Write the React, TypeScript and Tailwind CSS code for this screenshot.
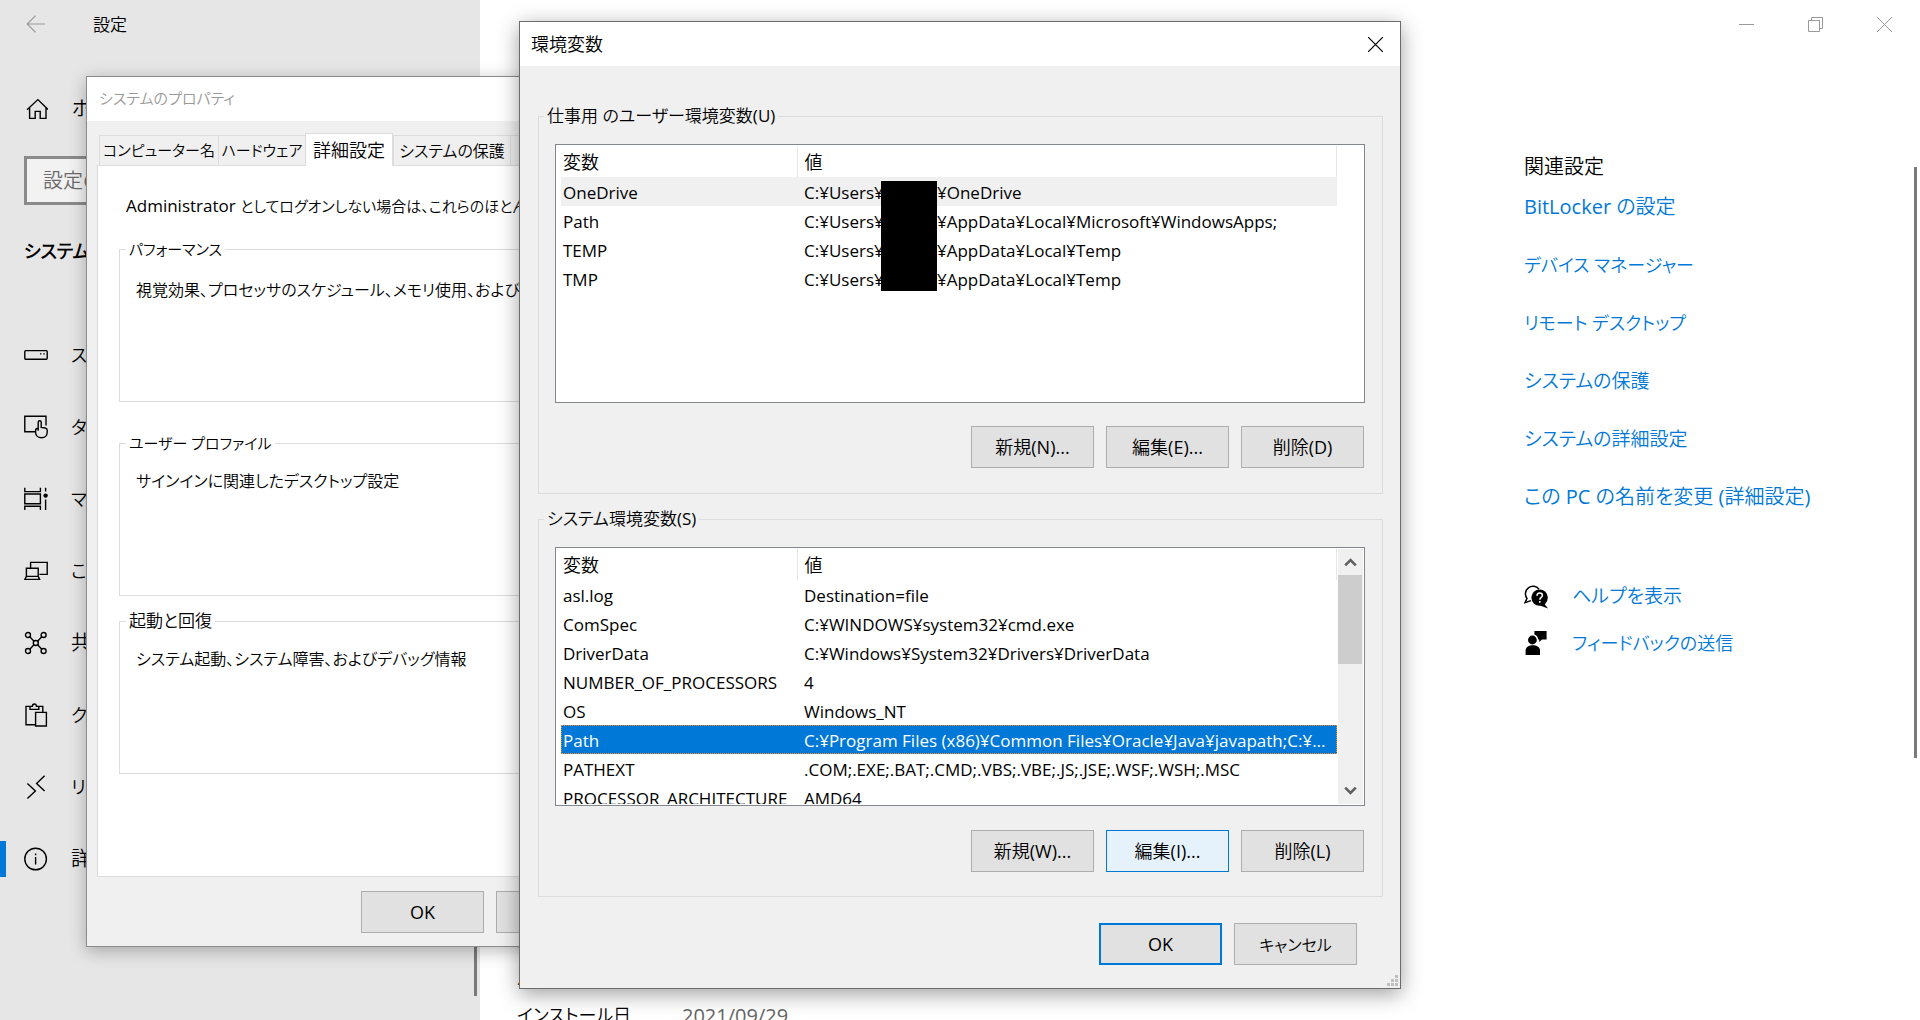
import React from 'react';

type Variable = { name: string; value?: string; masked?: string };

const userVariables: Variable[] = [
  { name: 'OneDrive', masked: '¥OneDrive' },
  { name: 'Path', masked: '¥AppData¥Local¥Microsoft¥WindowsApps;' },
  { name: 'TEMP', masked: '¥AppData¥Local¥Temp' },
  { name: 'TMP', masked: '¥AppData¥Local¥Temp' },
];

const systemVariables: Variable[] = [
  { name: 'asl.log', value: 'Destination=file' },
  { name: 'ComSpec', value: 'C:¥WINDOWS¥system32¥cmd.exe' },
  { name: 'DriverData', value: 'C:¥Windows¥System32¥Drivers¥DriverData' },
  { name: 'NUMBER_OF_PROCESSORS', value: '4' },
  { name: 'OS', value: 'Windows_NT' },
  { name: 'Path', value: 'C:¥Program Files (x86)¥Common Files¥Oracle¥Java¥javapath;C:¥...' },
  { name: 'PATHEXT', value: '.COM;.EXE;.BAT;.CMD;.VBS;.VBE;.JS;.JSE;.WSF;.WSH;.MSC' },
  { name: 'PROCESSOR_ARCHITECTURE', value: 'AMD64' },
];

function Icon({ children, size = 24 }: { children: React.ReactNode; size?: number }) {
  return (
    <svg
      width={size}
      height={size}
      viewBox={`0 0 ${size} ${size}`}
      fill="none"
      stroke="currentColor"
      strokeWidth="1.4"
      className="shrink-0"
      aria-hidden="true"
    >
      {children}
    </svg>
  );
}

const HomeIcon = () => (
  <Icon>
    <path d="M3 12.8 13.9 2.6 24 12.4M5.6 10.8V21.4H11.2V14.4H16.2V21.4H22V10.8" />
  </Icon>
);
const StorageIcon = () => (
  <Icon>
    <rect x="0.8" y="7.6" width="22.4" height="8.6" rx="1" />
    <path d="M16 10.9h1.4M19.3 10.9h1.4" />
  </Icon>
);
const TabletIcon = () => (
  <Icon>
    <path d="M11 16.8H.8V1.2H22V10.6" />
    <path d="M14.2 15.8V7.3a1.5 1.5 0 0 1 3 0v5.1l4 .6c1.2.2 2 .8 2 2v2.2c0 3.4-2.4 5.6-5.6 5.6-3.4 0-6-2.2-6-5.6v-1.6c0-1.7 1-2.4 2.6-2.4" />
  </Icon>
);
const MultitaskIcon = () => (
  <Icon>
    <path d="M.8.8v3.8h15.6V.8M.8 23v-3.8h15.6V23M.8 7h15.6v9.8H.8zM21.6.8v3.8M21.6 12.6V23" />
    <circle cx="21.6" cy="8.6" r="2.2" fill="currentColor" stroke="none" />
  </Icon>
);
const ProjectIcon = () => (
  <Icon>
    <path d="M6.6 9V3.4H23.2V15.4H15.4M2.4 9.2H14.2V17.4H2.4zM2.4 17.4.8 20.4H15.6L14.2 17.4" />
  </Icon>
);
const SharedIcon = () => (
  <Icon>
    <circle cx="4" cy="4" r="2.5" />
    <circle cx="19.6" cy="4" r="2.5" />
    <circle cx="4" cy="20" r="2.5" />
    <circle cx="19.6" cy="20" r="2.5" />
    <circle cx="11.8" cy="12" r="2.5" />
    <path d="m5.8 5.8 4.2 4.4M17.8 5.8l-4.2 4.4M5.8 18.2l4.2-4.4M17.8 18.2l-4.2-4.4" />
  </Icon>
);
const ClipboardIcon = () => (
  <Icon>
    <path d="M11 21.8H2V3.4H6M14.6 3.4H18.8V9M6 3.4V6.4H14.8V3.4H12.4C12.4.2 8.4.2 8.4 3.4zM11.6 9.4H22.4V23H11.6z" />
  </Icon>
);
const RemoteIcon = () => (
  <Icon>
    <path d="m3.4 8.4 8 7.6-8 7.4M20.6.8l-8 7.8 8 7.4" />
  </Icon>
);
const InfoIcon = () => (
  <Icon>
    <circle cx="11.6" cy="12" r="10.8" />
    <path d="M11.6 10v7.4M11.6 6.4v1.8" />
  </Icon>
);

const navItems = [
  { label: 'ストレージ', icon: <StorageIcon />, size: 'text-lg' },
  { label: 'タブレット', icon: <TabletIcon />, size: 'text-lg' },
  { label: 'マルチタスク', icon: <MultitaskIcon />, size: 'text-lg' },
  { label: 'この PC へのプロジェクション', icon: <ProjectIcon />, size: 'text-lg' },
  { label: '共有エクスペリエンス', icon: <SharedIcon />, size: 'text-xl' },
  { label: 'クリップボード', icon: <ClipboardIcon />, size: 'text-lg' },
  { label: 'リモート デスクトップ', icon: <RemoteIcon />, size: 'text-lg' },
  { label: '詳細情報', icon: <InfoIcon />, size: 'text-xl', active: true },
];

const relatedLinks = [
  { label: 'BitLocker の設定', size: 'text-xl' },
  { label: 'デバイス マネージャー', size: 'text-lg' },
  { label: 'リモート デスクトップ', size: 'text-lg' },
  { label: 'システムの保護', size: 'text-[19px]' },
  { label: 'システムの詳細設定', size: 'text-[19px]' },
  { label: 'この PC の名前を変更 (詳細設定)', size: 'text-xl' },
];

function Sidebar() {
  return (
    <aside className="relative w-[480px] shrink-0 bg-[#e6e6e6] text-xl">
      <div className="flex h-12 items-center gap-12 pl-[26px]">
        <button aria-label="戻る" className="text-[#999]">
          <svg width="19" height="18" viewBox="0 0 19 18" fill="none" stroke="currentColor" strokeWidth="1.2">
            <path d="M9.6.6 1.2 9l8.4 8.4M1.2 9H19" />
          </svg>
        </button>
        <h1 className="pt-px text-[17px]">設定</h1>
      </div>
      <a href="#home" className="mt-[37px] flex h-12 items-center gap-6 pl-6">
        <HomeIcon />
        ホーム
      </a>
      <div className="mt-[23px] px-6">
        <input
          aria-label="設定の検索"
          placeholder="設定の検索"
          className="h-[49px] w-full border-[3px] border-[#8a8a8a] bg-[#f2f2f2] px-4 placeholder:text-[#6b6b6b]"
        />
      </div>
      <h2 className="mt-8 pl-6 text-lg font-bold leading-7">システム</h2>
      <nav className="mt-[54px]">
        {navItems.map((item) => (
          <a key={item.label} href="#nav" className={`flex h-[72px] items-center ${item.size}`}>
            <span className={item.active ? 'h-9 w-1.5 bg-[#0078d7]' : 'h-9 w-1.5'} />
            <span className="flex items-center gap-[23px] pl-[18px]">
              {item.icon}
              {item.label}
            </span>
          </a>
        ))}
      </nav>
      <div className="absolute right-[3px] top-[170px] h-[826px] w-[3px] bg-[#7a7a7a]" />
    </aside>
  );
}

function HelpIcon() {
  return (
    <svg width="24" height="24" viewBox="0 0 24 24" className="shrink-0" aria-hidden="true">
      <path
        d="M7 15.6 1 17.6l2-4.2A7.4 7.4 0 1 1 15 4.2"
        fill="none"
        stroke="currentColor"
        strokeWidth="1.5"
      />
      <circle cx="15.6" cy="12.6" r="8.2" fill="currentColor" />
      <path d="m19 17 5 6.6-8-3z" fill="currentColor" />
      <path
        d="M13 10.8c0-3.8 5.4-3.4 5.4-.4 0 2-2.6 2-2.6 4.4M15.8 16v1.8"
        fill="none"
        stroke="white"
        strokeWidth="1.5"
      />
    </svg>
  );
}

function FeedbackIcon() {
  return (
    <svg width="24" height="24" viewBox="0 0 24 24" fill="currentColor" className="shrink-0" aria-hidden="true">
      <path d="M10.4 0H22.6V8.4H18L15.2 11V8.4H14.2C14 5.8 12.6 4 10.4 3.4z" />
      <circle cx="8.4" cy="9" r="4.4" />
      <path d="M1.6 24v-4.6c0-7 14.4-7 14.4 0V24z" />
    </svg>
  );
}

function SettingsPage() {
  return (
    <main className="relative flex min-w-0 flex-1">
      <div className="flex min-w-0 flex-1 flex-col pl-[37px]">
        <div className="ml-[262px] flex h-[2px]">
          <span className="w-[72px] bg-[#0078d7]" />
          <span className="w-[290px] bg-[#e5e5e5]" />
        </div>
        <dl className="mt-[923px] grid grid-cols-[165px_1fr] text-lg leading-[37px]">
          <dt>エディション</dt>
          <dd className="text-[#666]">Windows 10 Pro</dd>
          <dt>バージョン</dt>
          <dd className="text-[#666]">21H1</dd>
          <dt>インストール日</dt>
          <dd className="text-xl leading-[37px] text-[#666]">2021/09/29</dd>
        </dl>
      </div>
      <aside className="w-[396px] shrink-0 text-xl">
        <div className="flex h-12 items-center justify-end gap-[54px] pr-7 text-[#999]">
          <button aria-label="最小化">
            <svg width="15" height="15" fill="none" stroke="currentColor">
              <path d="M0 7.5h15" />
            </svg>
          </button>
          <button aria-label="元に戻す">
            <svg width="15" height="15" fill="none" stroke="currentColor">
              <path d="M.5 3.5h11v11H.5zM3.5 3V.5h11v11H12" />
            </svg>
          </button>
          <button aria-label="閉じる">
            <svg width="15" height="15" fill="none" stroke="currentColor">
              <path d="m0 0 15 15M15 0 0 15" />
            </svg>
          </button>
        </div>
        <h2 className="mt-[105px] leading-7">関連設定</h2>
        <ul className="mt-3 flex flex-col gap-[30px] text-[#0078d7]">
          {relatedLinks.map((link) => (
            <li key={link.label} className={`h-7 ${link.size}`}>
              <a href="#related" className="leading-7">
                {link.label}
              </a>
            </li>
          ))}
        </ul>
        <div className="mt-[72px] flex flex-col gap-[18px] text-lg">
          <a href="#help" className="flex h-7 items-center gap-6">
            <HelpIcon />
            <span className="text-[19px] text-[#0078d7]">ヘルプを表示</span>
          </a>
          <a href="#feedback" className="flex h-7 items-center gap-6">
            <FeedbackIcon />
            <span className="text-[#0078d7]">フィードバックの送信</span>
          </a>
        </div>
      </aside>
      <div className="absolute right-[3px] top-[167px] h-[591px] w-[3px] bg-[#7a7a7a]" />
    </main>
  );
}

function Button({ children, tone = 'plain' }: { children: React.ReactNode; tone?: 'plain' | 'hover' | 'default' }) {
  const tones = {
    plain: 'border border-[#adadad] bg-[#e1e1e1]',
    hover: 'border border-[#0078d7] bg-[#e5f1fb]',
    default: 'border-2 border-[#0078d7] bg-[#e1e1e1]',
  };
  return <button className={`h-[42px] w-[123px] shrink-0 whitespace-nowrap ${tones[tone]}`}>{children}</button>;
}

const tabs = [
  { label: 'コンピューター名', cls: 'w-[120px] text-[15px]' },
  { label: 'ハードウェア', cls: 'w-[88px] text-[15px]' },
  { label: '詳細設定', cls: 'w-[88px]', active: true },
  { label: 'システムの保護', cls: 'w-[118px] text-base' },
  { label: 'リモート', cls: 'w-[80px] text-[15px]' },
];

const propertyGroups = [
  {
    title: 'パフォーマンス',
    titleCls: 'text-[15px]',
    text: '視覚効果、プロセッサのスケジュール、メモリ使用、および仮想メモリ',
    gap: 'mt-[19px]',
    textGap: 'mt-[17px]',
  },
  {
    title: 'ユーザー プロファイル',
    titleCls: 'text-[15px]',
    text: 'サインインに関連したデスクトップ設定',
    gap: 'mt-[29px]',
    textGap: 'mt-[14px]',
  },
  {
    title: '起動と回復',
    titleCls: 'text-[17px]',
    text: 'システム起動、システム障害、およびデバッグ情報',
    gap: 'mt-[13px]',
    textGap: 'mt-[14px]',
  },
];

function SystemProperties() {
  return (
    <section
      aria-label="システムのプロパティ"
      className="absolute left-[86px] top-[76px] w-[684px] border border-[#8c8c8c] bg-[#f0f0f0] pb-[13px] shadow-[0_4px_16px_rgba(0,0,0,0.28)]"
    >
      <header className="flex h-[44px] items-center bg-white pl-3 text-[15px] text-[#999]">システムのプロパティ</header>
      <div className="mt-3 flex h-8 items-end pl-3" role="tablist">
        {tabs.map((tab) => (
          <button
            key={tab.label}
            role="tab"
            aria-selected={!!tab.active}
            className={`whitespace-nowrap border border-b-0 border-[#dcdcdc] ${tab.cls} ${
              tab.active ? 'relative -mb-px h-[33px] bg-white' : '-mr-px h-[30px]'
            }`}
          >
            {tab.label}
          </button>
        ))}
      </div>
      <div className="mx-[10px] flex flex-col border border-[#dcdcdc] bg-white px-[21px] pb-[39px] pt-7">
        <p className="h-6 whitespace-nowrap pl-[7px] text-[15px] leading-6">
          <span className="text-[17px]">Administrator </span>
          としてログオンしない場合は、これらのほとんどは変更できません。
        </p>
        {propertyGroups.map((group) => (
          <fieldset key={group.title} className={`h-[165px] border border-[#dcdcdc] pl-4 ${group.gap}`}>
            <legend className={`-ml-[10px] px-[3px] leading-6 ${group.titleCls}`}>{group.title}</legend>
            <p className={`whitespace-nowrap text-base leading-6 ${group.textGap}`}>{group.text}</p>
          </fieldset>
        ))}
        <div className="mt-[21px] flex justify-end">
          <button className="h-[42px] w-[216px] border border-[#adadad] bg-[#e1e1e1]">環境変数(N)...</button>
        </div>
      </div>
      <footer className="mt-[14px] flex justify-end gap-3 pr-[15px]">
        <Button>OK</Button>
        <Button>
          <span className="text-base">キャンセル</span>
        </Button>
        <Button>適用(A)</Button>
      </footer>
    </section>
  );
}

function ScrollArrow({ down = false }: { down?: boolean }) {
  return (
    <button aria-label={down ? '下へスクロール' : '上へスクロール'} className="flex h-[26px] w-full items-center justify-center">
      <svg width="13" height="10" viewBox="0 0 13 10" fill="none" stroke="#606060" strokeWidth="2.6">
        <path d={down ? 'm1.2 1.6 5.3 5.4 5.3-5.4' : 'm1.2 8.4 5.3-5.4 5.3 5.4'} />
      </svg>
    </button>
  );
}

function VariableTable({
  rows,
  label,
  selected,
  muted,
  scroll,
}: {
  rows: Variable[];
  label: string;
  selected?: number;
  muted?: number;
  scroll?: boolean;
}) {
  return (
    <div className="flex h-[259px] border border-[#828790] bg-white p-px pl-[5px]">
      <div className="min-w-0 flex-1 overflow-hidden">
        <table aria-label={label} className="w-full table-fixed text-left">
          <thead>
            <tr className="h-[31px]">
              <th className="w-[236px] border-r border-[#e5e5e5] p-0 pl-[2px] pt-px font-normal leading-[30px]">
                変数
              </th>
              <th className="border-r border-[#e5e5e5] p-0 pl-[7px] pt-px font-normal leading-[30px]">値</th>
            </tr>
          </thead>
          <tbody className="text-[17px]">
            {rows.map((row, i) => (
              <tr
                key={row.name}
                className={
                  i === selected
                    ? 'h-[29px] bg-[#0078d7] text-white outline-1 -outline-offset-1 outline-dotted outline-[#ff8728]'
                    : i === muted
                      ? 'h-[29px] bg-[#f0f0f0]'
                      : 'h-[29px]'
                }
              >
                <td className="whitespace-nowrap p-0 pl-[2px] pt-[2px] leading-[27px]">{row.name}</td>
                {row.masked ? (
                  <td className="whitespace-nowrap p-0 pl-[7px]">
                    <span className="flex h-[29px] leading-[31px]">
                      <span className="w-[77px]">C:¥Users¥</span>
                      <span
                        className={`w-14 bg-black ${i === 0 ? 'mt-1' : ''} ${i === rows.length - 1 ? 'mb-[2px]' : ''}`}
                      />
                      {row.masked}
                    </span>
                  </td>
                ) : (
                  <td className="whitespace-nowrap p-0 pl-[7px] pt-[2px] leading-[27px]">{row.value}</td>
                )}
              </tr>
            ))}
          </tbody>
        </table>
      </div>
      {scroll ? (
        <div className="ml-px flex w-[25px] shrink-0 flex-col bg-[#f0f0f0]">
          <ScrollArrow />
          <div className="flex-1">
            <div className="h-[89px] w-6 bg-[#cdcdcd]" />
          </div>
          <ScrollArrow down />
        </div>
      ) : (
        <div className="w-[26px] shrink-0" />
      )}
    </div>
  );
}

function EnvironmentVariables() {
  return (
    <section
      aria-label="環境変数"
      className="absolute left-[519px] top-[21px] w-[882px] border border-[#6b6b6b] bg-[#f0f0f0] shadow-[0_5px_20px_rgba(0,0,0,0.38)]"
    >
      <header className="flex h-11 items-center justify-between bg-white pl-[11px] pr-[17px]">
        <h2>環境変数</h2>
        <button aria-label="閉じる">
          <svg width="15" height="15" fill="none" stroke="black" strokeWidth="1.2">
            <path d="m0 0 15 15M15 0 0 15" />
          </svg>
        </button>
      </header>
      <div className="pl-[18px] pr-[17px] pt-[38px]">
        <fieldset className="h-[390px] border border-[#dcdcdc] pl-4 pr-[17px]">
          <legend className="-ml-[11px] px-[3px] text-[17px] leading-6">仕事用 のユーザー環境変数(U)</legend>
          <div className="mt-4">
            <VariableTable rows={userVariables} label="ユーザー環境変数" muted={0} />
          </div>
          <div className="mt-[23px] flex justify-end gap-3 pr-px">
            <Button>新規(N)...</Button>
            <Button>編集(E)...</Button>
            <Button>削除(D)</Button>
          </div>
        </fieldset>
        <fieldset className="mt-[13px] h-[390px] border border-[#dcdcdc] pl-4 pr-[17px]">
          <legend className="-ml-[11px] px-[3px] text-[17px] leading-6">システム環境変数(S)</legend>
          <div className="mt-4">
            <VariableTable rows={systemVariables} label="システム環境変数" selected={5} scroll />
          </div>
          <div className="mt-6 flex justify-end gap-3 pr-px">
            <Button>新規(W)...</Button>
            <Button tone="hover">編集(I)...</Button>
            <Button>削除(L)</Button>
          </div>
        </fieldset>
      </div>
      <footer className="mb-[23px] mt-[26px] flex justify-end gap-3 pr-[43px]">
        <Button tone="default">OK</Button>
        <Button>
          <span className="text-base">キャンセル</span>
        </Button>
      </footer>
      <svg width="11" height="11" className="absolute bottom-[2px] right-[2px]" fill="#bfbfbf" aria-hidden="true">
        <path d="M8 0h3v3H8zM4 4h3v3H4zM8 4h3v3H8zM0 8h3v3H0zM4 8h3v3H4zM8 8h3v3H8z" />
      </svg>
    </section>
  );
}

export default function App() {
  return (
    <div className="relative flex h-screen overflow-hidden bg-white font-['Open_Sans','Noto_Sans_CJK_JP_DemiLight','Noto_Sans_CJK_JP',sans-serif] text-lg text-black [font-feature-settings:'palt']">
      <Sidebar />
      <SettingsPage />
      <SystemProperties />
      <EnvironmentVariables />
    </div>
  );
}
